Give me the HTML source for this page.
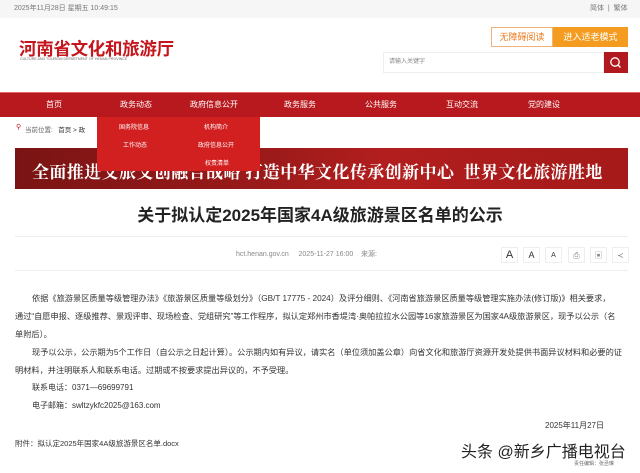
<!DOCTYPE html>
<html><head><meta charset="utf-8"><style>
*{margin:0;padding:0;box-sizing:border-box}
body{width:640px;height:473px;overflow:hidden;background:#fff;font-family:"Liberation Sans","Noto Sans CJK SC",sans-serif;position:relative;color:#333}
.a{position:absolute;white-space:nowrap}
.ib{position:absolute;top:0;width:17px;height:16px;border:1px solid #eee;text-align:center;line-height:15px}
.p{position:absolute;left:15px;font-size:8.2px;line-height:18px;color:#333;white-space:nowrap}
.in{display:inline-block;width:17px}
</style></head><body>
<div class="a" style="left:0;top:0;width:640px;height:18px;background:#f6f6f6"></div>
<div class="a" style="left:14px;top:3px;font-size:7px;color:#777">2025年11月28日 星期五 10:49:15</div>
<div class="a" style="left:590px;top:3px;font-size:7px;color:#777">简体 &nbsp;|&nbsp; 繁体</div>

<div class="a" style="left:19px;top:36px;font-size:17.5px;font-weight:bold;color:#c4161c;letter-spacing:-0.3px">河南省文化和旅游厅</div>
<div class="a" style="left:20px;top:57px;font-size:3.6px;color:#666">CULTURE AND TOURISM DEPARTMENT OF HENAN PROVINCE</div>

<div class="a" style="left:491px;top:27px;width:62px;height:20px;border:1px solid #f3b27a;color:#ec7a1c;font-size:9px;text-align:center;line-height:18px">无障碍阅读</div>
<div class="a" style="left:553px;top:27px;width:75px;height:20px;background:#f39c1f;color:#fff;font-size:9px;text-align:center;line-height:20px">进入适老模式</div>
<div class="a" style="left:383px;top:52px;width:221px;height:21px;border:1px solid #eee;font-size:6px;color:#888;line-height:19px;padding-left:5px">请输入关键字</div>
<div class="a" style="left:604px;top:52px;width:24px;height:21px;background:#b01a1e"><svg width="24" height="21"><circle cx="11" cy="10" r="4.2" fill="none" stroke="#fff" stroke-width="1.3"/><line x1="14" y1="13" x2="16.5" y2="15.5" stroke="#fff" stroke-width="1.3"/></svg></div>

<div class="a" style="left:0;top:92px;width:640px;height:25px;background:#b8191e;border-top:1px solid #e06a6a"></div>
<div class="a" style="left:0;top:99px;width:640px;font-size:8px;color:#fff">
<span class="a" style="left:46px">首页</span><span class="a" style="left:120px">政务动态</span><span class="a" style="left:190px">政府信息公开</span><span class="a" style="left:284px">政务服务</span><span class="a" style="left:365px">公共服务</span><span class="a" style="left:446px">互动交流</span><span class="a" style="left:528px">党的建设</span></div>

<div class="a" style="left:16px;top:123px;font-size:7px;color:#c4161c">⚲</div>
<div class="a" style="left:25px;top:124px;font-size:6.5px;color:#666">当前位置: &nbsp; <span style="color:#333">首页 &gt; 政</span></div>

<div class="a" style="left:15px;top:148px;width:613px;height:41px;background:linear-gradient(90deg,#7a1414 0%,#9a1a1a 40%,#b21e1e 60%,#a51a1a 100%)"></div>
<div class="a" style="left:32px;top:158px;font-size:17px;font-weight:bold;color:#fff;font-family:'Noto Serif CJK SC',serif;letter-spacing:0.4px">全面推进文旅文创融合战略 打造中华文化传承创新中心 &nbsp;世界文化旅游胜地</div>

<div class="a" style="left:97px;top:117px;width:163px;height:54px;background:#d21f20"></div>
<div class="a" style="left:97px;top:122px;font-size:6px;color:#fff"><span class="a" style="left:22px">国务院信息</span><span class="a" style="left:107px">机构简介</span><span class="a" style="left:26px;top:18px">工作动态</span><span class="a" style="left:101px;top:18px">政府信息公开</span><span class="a" style="left:108px;top:36px">权责清单</span></div>

<div class="a" style="left:0;top:201px;width:640px;text-align:center;font-size:17px;font-weight:bold;color:#222">关于拟认定2025年国家4A级旅游景区名单的公示</div>
<div class="a" style="left:15px;top:236px;width:613px;border-top:1px solid #eee"></div>
<div class="a" style="left:236px;top:249px;font-size:7px;color:#888">hct.henan.gov.cn &nbsp; &nbsp; 2025-11-27 16:00 &nbsp; &nbsp;来源:</div>
<div class="a" style="left:501px;top:247px;color:#333">
<span class="ib" style="left:0;font-size:11px">A</span>
<span class="ib" style="left:22px;font-size:9px">A</span>
<span class="ib" style="left:44px;font-size:7px">A</span>
<span class="ib" style="left:67px;font-size:8px;color:#888">⎙</span>
<span class="ib" style="left:89px;font-size:8px;color:#888">▣</span>
<span class="ib" style="left:111px;font-size:8px;color:#888">≺</span></div>
<div class="a" style="left:15px;top:270px;width:613px;border-top:1px solid #eee"></div>

<div class="p" style="top:290px"><span class="in"></span>依据《旅游景区质量等级管理办法》《旅游景区质量等级划分》（GB/T 17775 - 2024）及评分细则、《河南省旅游景区质量等级管理实施办法(修订版)》相关要求，<br>通过“自愿申报、逐级推荐、景观评审、现场检查、党组研究”等工作程序，拟认定郑州市香堤湾·奥帕拉拉水公园等16家旅游景区为国家4A级旅游景区，现予以公示（名<br>单附后）。</div>
<div class="p" style="top:344px"><span class="in"></span>现予以公示，公示期为5个工作日（自公示之日起计算）。公示期内如有异议，请实名（单位须加盖公章）向省文化和旅游厅资源开发处提供书面异议材料和必要的证<br>明材料，并注明联系人和联系电话。过期或不按要求提出异议的，不予受理。</div>
<div class="a" style="left:32px;top:382px;font-size:8px;color:#333">联系电话：0371—69699791</div>
<div class="a" style="left:32px;top:400px;font-size:8px;color:#333">电子邮箱：swltzykfc2025@163.com</div>
<div class="a" style="left:545px;top:420px;font-size:8px;color:#333">2025年11月27日</div>
<div class="a" style="left:15px;top:438px;font-size:7.5px;color:#333">附件：拟认定2025年国家4A级旅游景区名单.docx</div>
<div class="a" style="left:461px;top:438px;font-size:16px;color:#222;text-shadow:0 0 2px #fff">头条 @新乡广播电视台</div>
<div class="a" style="left:574px;top:460px;font-size:5px;color:#666">责任编辑：张丞琳</div>
</body></html>
